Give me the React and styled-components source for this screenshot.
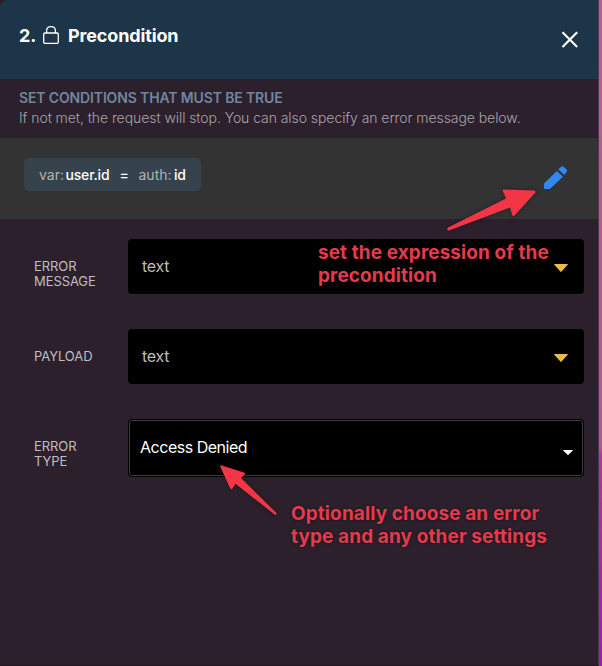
import React from "react";
import styled, { createGlobalStyle } from "styled-components";

const GlobalStyle = createGlobalStyle`
  * { box-sizing: border-box; }
  body { margin: 0; background: #2b202c; font-family: Inter, "Liberation Sans", sans-serif; }
`;

const Page = styled.div`
  position: relative;
  display: flex;
  width: 602px;
  height: 666px;
  overflow: hidden;
  background: #2b202c;
`;

const Panel = styled.main`
  width: 599px;
  height: 666px;
  border-right: 1px solid #4d3a50;
  border-bottom: 1px solid #21151f;
  border-top-left-radius: 8px;
  overflow: hidden;
`;

const Edge = styled.div`
  width: 3px;
  background: linear-gradient(#bd5c90 0, #b05794 448px, #a83b9c 455px, #9a1fad 666px);
`;

const Header = styled.header`
  display: flex;
  justify-content: space-between;
  height: 79px;
  padding: 0 19px 0 19px;
  background: #1c3548;
`;

const Title = styled.h1`
  display: flex;
  margin: 24px 0 0;
  height: 24px;
  font-size: 18px;
  line-height: 24px;
  font-weight: 700;
  letter-spacing: -0.14px;
  color: #fff;
  white-space: nowrap;

  svg { margin: 2px 9px 0 7px; }
`;

const TitleNumber = styled.span`
  width: 17px;
`;

const CloseButton = styled.button`
  display: block;
  width: 18px;
  height: 18px;
  margin-top: 31px;
  padding: 0;
  border: 0;
  background: none;

  svg { display: block; }
`;

const Intro = styled.section`
  height: 59px;
  padding: 9px 19px 0;
`;

const IntroHeading = styled.h2`
  margin: 0;
  font-size: 14px;
  line-height: 20px;
  font-weight: 600;
  letter-spacing: -0.14px;
  color: #71879f;
`;

const IntroText = styled.p`
  margin: 0;
  font-size: 14px;
  line-height: 20px;
  font-weight: 300;
  letter-spacing: -0.067px;
  color: #a9a4aa;
  white-space: nowrap;
`;

const ExpressionBar = styled.section`
  display: flex;
  justify-content: space-between;
  height: 81px;
  padding: 20px 30px 0 24px;
  background: #333;
`;

const Expression = styled.div`
  display: flex;
  align-items: center;
  width: 177px;
  height: 33px;
  padding: 0 0 0 15px;
  border-radius: 5px;
  background: #36434d;
  font-size: 14px;
  color: #fff;
  white-space: nowrap;
`;

const Scope = styled.span`
  width: ${(p) => p.$width}px;
  color: #aeb2b5;
`;

const Name = styled.span`
  width: ${(p) => p.$width}px;
  font-weight: 500;
  letter-spacing: -0.17px;
`;

const EditButton = styled.button`
  display: block;
  width: 24px;
  height: 24px;
  margin-top: 8px;
  padding: 0;
  border: 0;
  background: none;

  svg { display: block; }
`;

const Form = styled.form`
  display: flex;
  flex-direction: column;
  gap: 35px;
  padding: 20px 14px 0 34px;
`;

const Field = styled.div`
  display: flex;
  align-items: flex-start;
`;

const Label = styled.label`
  width: 94px;
  margin-top: 20px;
  padding-right: 20px;
  font-size: 13px;
  line-height: 15px;
  letter-spacing: -0.08px;
  color: #c1bdc1;
`;

const Control = styled.div`
  display: flex;
  align-items: center;
  justify-content: space-between;
  width: 456px;
  height: 55px;
  padding: 0 16px 2px 14px;
  border-radius: 4px;
  background: #000;
  font-size: 16px;
  letter-spacing: -0.3px;
  color: #bcbcbc;

  svg { margin-top: 5px; }
`;

const SelectControl = styled(Control)`
  height: 58px;
  padding: 0 10px 2px 11px;
  border: 1px solid #000;
  box-shadow: inset 0 0 0 1px #3b3b3b;
  letter-spacing: -0.48px;
  color: #fff;

  svg { margin-top: 10px; }
`;

const Annotations = styled.div`
  position: absolute;
  inset: 0;
  pointer-events: none;
`;

const Arrows = styled.svg`
  position: absolute;
  inset: 0;
  filter: drop-shadow(0 0 2px #0005);
`;

const Note = styled.p`
  position: absolute;
  left: ${(p) => p.$x}px;
  top: ${(p) => p.$y}px;
  margin: 0;
  font-size: 19px;
  line-height: 23px;
  font-weight: 700;
  letter-spacing: ${(p) => p.$tracking}px;
  color: #e33b4c;
  text-shadow: 0 0 3px #0008;
  white-space: nowrap;
`;

function LockIcon() {
  return (
    <svg width="16" height="18" viewBox="0 0 16 18" fill="none" stroke="#fff" strokeWidth="1.3">
      <rect x="0.7" y="7" width="14.6" height="10.3" rx="1.2" />
      <path d="M3.6 7V4.8C3.6 2.3 5.5 .7 8 .7s4.4 1.6 4.4 4.1V7" />
    </svg>
  );
}

function CloseIcon() {
  return (
    <svg width="18" height="18" viewBox="0 0 18 18" fill="none" stroke="#fff" strokeWidth="2.1">
      <path d="M1.5 1.2 16.2 15.9M16.2 1.2 1.5 15.9" />
    </svg>
  );
}

function PencilIcon() {
  return (
    <svg width="24" height="24" viewBox="0 0 24 24" fill="#3188f2">
      <path d="M0 22.3V18.2Q0 17.4 .7 16.7L12.9 4.9 18.9 10.7 6.6 22.3Q6 23 5.2 23H.8Q0 23 0 22.3Z" />
      <path d="M14.4 3.5 17.1.8Q18.4-.4 19.7.8L22.5 3.4Q23.7 4.7 22.5 6.1L20.2 9.1Z" />
    </svg>
  );
}

function Caret({ color, width, height }) {
  return (
    <svg width={width} height={height} viewBox="0 0 14 8" preserveAspectRatio="none" fill={color}>
      <path d="M.5 0h13q.7.2.2.8L7.6 7.6Q7 8.2 6.4 7.6L.3.8Q-.2.2.5 0Z" />
    </svg>
  );
}

export default function App() {
  return (
    <Page>
      <GlobalStyle />
      <Panel>
        <Header>
          <Title>
            <TitleNumber>2.</TitleNumber>
            <LockIcon />
            <span>Precondition</span>
          </Title>
          <CloseButton type="button" aria-label="Close"><CloseIcon /></CloseButton>
        </Header>
        <Intro>
          <IntroHeading>SET CONDITIONS THAT MUST BE TRUE</IntroHeading>
          <IntroText>If not met, the request will stop. You can also specify an error message below.</IntroText>
        </Intro>
        <ExpressionBar>
          <Expression>
            <Scope $width={26.5}>var:</Scope>
            <Name $width={54}>user.id</Name>
            <Name $width={19}>=</Name>
            <Scope $width={35.5}>auth:</Scope>
            <Name $width={12}>id</Name>
          </Expression>
          <EditButton type="button" aria-label="Edit expression"><PencilIcon /></EditButton>
        </ExpressionBar>
        <Form>
          <Field>
            <Label>ERROR MESSAGE</Label>
            <Control>text<Caret color="#e9bd43" width={14} height={8} /></Control>
          </Field>
          <Field>
            <Label>PAYLOAD</Label>
            <Control>text<Caret color="#e9bd43" width={14} height={8} /></Control>
          </Field>
          <Field>
            <Label>ERROR TYPE</Label>
            <SelectControl>Access Denied<Caret color="#fff" width={10} height={5} /></SelectControl>
          </Field>
        </Form>
      </Panel>
      <Edge />
      <Annotations>
        <Arrows width="602" height="666" viewBox="0 0 602 666" fill="#f33546">
          <path d="M448 227.5 506 198.5 502.5 190.5Q502.5 189.3 504 189.5L534 190.5Q536.5 191 535 193L514.5 215.5Q513 216.5 512.2 215L510 207.5 449 230.5Q446 230.5 448 227.5Z" />
          <path d="M221 465.2 244 472.5Q246 473.5 244.5 474.5L241 478 276.5 513Q277 515.5 274.5 514.5L235.5 483.7 232.5 488.5Q231 490 230 488L220.2 466.5Q220 465 221 465.2Z" />
        </Arrows>
        <Note $x={318} $y={241} $tracking={0.08}>set the expression of the<br />precondition</Note>
        <Note $x={291} $y={502} $tracking={0.1}>Optionally choose an error<br />type and any other settings</Note>
      </Annotations>
    </Page>
  );
}
